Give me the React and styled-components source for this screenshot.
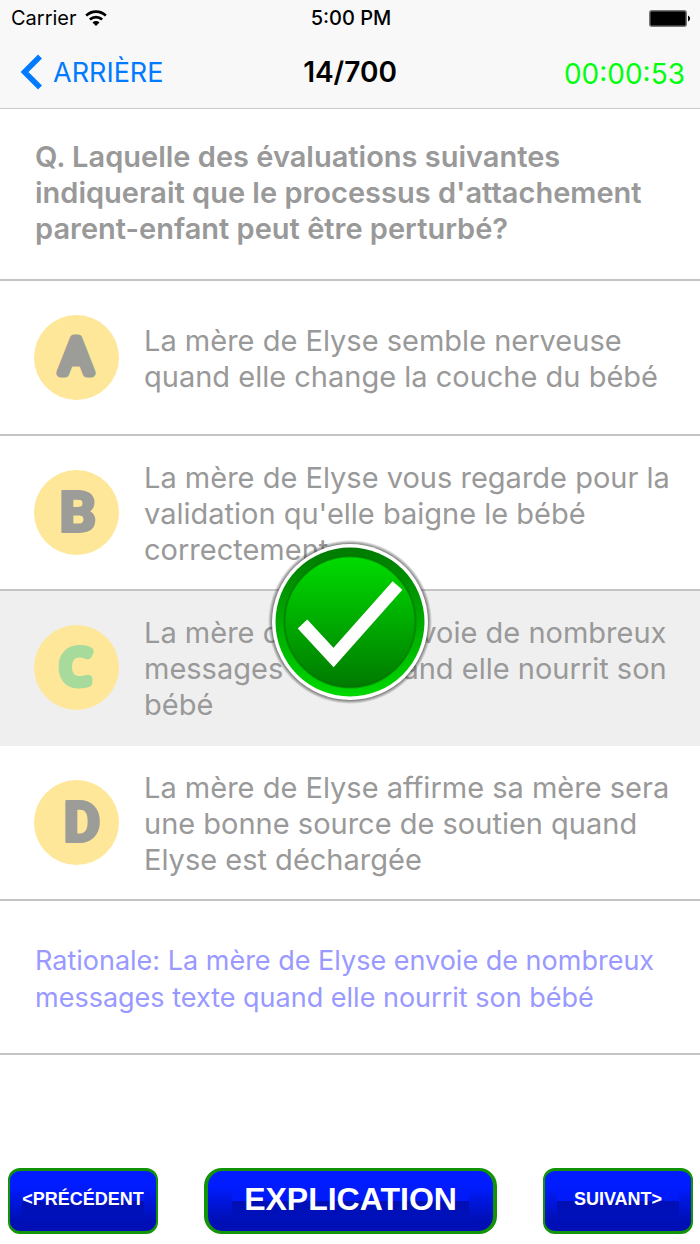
import React, { useState } from 'react'
import styled, { createGlobalStyle } from 'styled-components'

const GlobalStyle = createGlobalStyle`
  *, *::before, *::after {
    box-sizing: border-box;
  }

  body {
    margin: 0;
    background: #fff;
    font-family: Inter, Roboto, sans-serif;
  }

  h1, h2, p, ul {
    margin: 0;
    padding: 0;
  }
`

const Screen = styled.div`
  position: relative;
  display: flex;
  flex-direction: column;
  min-height: 100vh;
`

const Header = styled.header`
  background: #f8f8f8;
  border-bottom: 1px solid #cacaca;
`

const StatusBar = styled.div`
  display: grid;
  grid-template-columns: 1fr auto 1fr;
  align-items: center;
  height: 36px;
  padding: 0 9px 0 11px;
  font-size: 20px;
  color: #000;
`

const Carrier = styled.div`
  display: flex;
  align-items: center;
  gap: 8px;
`

const Clock = styled.div`
  font-weight: 500;
`

const Battery = styled.svg`
  justify-self: end;
`

const NavBar = styled.nav`
  display: grid;
  grid-template-columns: 1fr auto 1fr;
  align-items: center;
  height: 72px;
  padding: 0 15px;
`

const BackLink = styled.a`
  display: flex;
  align-items: center;
  gap: 10px;
  padding-left: 5px;
  font-size: 27px;
  color: #007aff;
  text-decoration: none;
`

const Counter = styled.h1`
  font-size: 28px;
  font-weight: 600;
`

const Timer = styled.div`
  justify-self: end;
  padding-top: 4px;
  font-size: 28px;
  color: #00ff0d;
`

const Question = styled.h2`
  padding: 30px 35px 32px;
  border-bottom: 2px solid #c4c4c4;
  font-size: 29px;
  font-weight: 600;
  line-height: 36px;
  color: #999;
`

const Options = styled.ul`
  list-style: none;
`

const OptionButton = styled.button`
  display: flex;
  align-items: center;
  gap: 25px;
  width: 100%;
  min-height: 155px;
  padding: 20px 24px 21px 34px;
  border: 0;
  border-bottom: 2px solid ${(props) => (props.$selected ? '#efefef' : '#c4c4c4')};
  background: ${(props) => (props.$selected ? '#efefef' : '#fff')};
  font-family: inherit;
  font-size: 29px;
  line-height: 36px;
  text-align: left;
  color: #999;
`

const OptionText = styled.span`
  padding-top: 4px;
`

const LetterBadge = styled.svg`
  flex: none;
  width: 85px;
  height: 85px;
`

const Rationale = styled.p`
  padding: 41px 35px 37px;
  border-bottom: 2px solid #c4c4c4;
  font-size: 27px;
  line-height: 37px;
  color: #9999ff;
`

const Footer = styled.footer`
  display: grid;
  grid-template-columns: 150fr 293fr 150fr;
  gap: 46px;
  margin-top: auto;
  padding: 16px 7px 10px 8px;
`

const FooterButton = styled.button`
  height: 66px;
  padding: 0 0 4px;
  border: 3px solid #139408;
  border-width: ${(props) => (props.$wide ? '3px 4px' : '3px 2px')};
  border-radius: ${(props) => (props.$wide ? '18px' : '12px')};
  background:
    linear-gradient(#001cff 0, #0019f6 50%, #0010b4 50%, #0011bc 100%) center / calc(100% - ${(props) => (props.$wide ? '48px' : '24px')}) 38px no-repeat,
    linear-gradient(#001cff 0, #001cff 25%, #0010b8 80%, #0010b4 100%);
  font-family: "Liberation Sans", Arial, sans-serif;
  font-size: ${(props) => (props.$wide ? '32px' : '18px')};
  font-weight: 700;
  white-space: nowrap;
  color: #fff;
`

const Result = styled.svg`
  position: absolute;
  top: 50%;
  left: 50%;
  width: 164px;
  height: 164px;
  margin: -82px 0 0 -82px;
  pointer-events: none;
`

const options = [
  { letter: 'A', x: 42, y: 58, round: true, text: 'La mère de Elyse semble nerveuse quand elle change la couche du bébé' },
  { letter: 'B', x: 44, y: 62, text: "La mère de Elyse vous regarde pour la validation qu'elle baigne le bébé correctement" },
  { letter: 'C', x: 41, y: 59, round: true, text: 'La mère de Elyse envoie de nombreux messages texte quand elle nourrit son bébé' },
  { letter: 'D', x: 48, y: 62, text: 'La mère de Elyse affirme sa mère sera une bonne source de soutien quand Elyse est déchargée' },
]

const Option = ({ letter, x, y, round, text, selected, onSelect }) => {
  const color = selected ? '#a6db9c' : '#9c9c98'

  return (
    <li>
      <OptionButton type="button" $selected={selected} aria-pressed={selected} onClick={onSelect}>
        <LetterBadge viewBox="0 0 85 85">
          <circle cx="42.5" cy="42.5" r="42.5" fill="#ffe799" />
          <text
            x={x}
            y={y}
            textAnchor="middle"
            fontFamily={round ? '"Open Sans", sans-serif' : 'Roboto, sans-serif'}
            fontSize={round ? 48 : 58}
            fontWeight={round ? 400 : 900}
            fill={color}
            stroke={color}
            strokeWidth={round ? 9 : 2}
            strokeLinejoin="round"
          >
            {letter}
          </text>
        </LetterBadge>
        <OptionText>{text}</OptionText>
      </OptionButton>
    </li>
  )
}

const App = () => {
  const [selected, setSelected] = useState('C')

  return (
    <>
      <GlobalStyle />
      <Screen>
        <Header>
          <StatusBar>
            <Carrier>
              Carrier
              <svg width="22" height="17" viewBox="0 0 22 17" fill="none" stroke="#000" strokeWidth="2.7" aria-label="Wi-Fi">
                <path d="M1.2 5.6a14 14 0 0 1 19.6 0" />
                <path d="M4.9 9.5a8.8 8.8 0 0 1 12.2 0" />
                <path d="M11 16l-3.5-3.5a5 5 0 0 1 7 0z" fill="#000" stroke="none" />
              </svg>
            </Carrier>
            <Clock>5:00 PM</Clock>
            <Battery width="42" height="17" viewBox="0 0 42 17" aria-label="Battery">
              <rect x="0.75" y="0.75" width="36.5" height="15.5" rx="2" fill="#000" stroke="#777" strokeWidth="1.5" />
              <path d="M39 5.5a3.2 3.2 0 0 1 0 6z" fill="#000" />
            </Battery>
          </StatusBar>
          <NavBar>
            <BackLink href="#">
              <svg width="23" height="36" viewBox="0 0 23 36" fill="none" stroke="#007aff" strokeWidth="5.5">
                <path d="M20 2.5L4.500 18 20 33.500" />
              </svg>
              ARRIÈRE
            </BackLink>
            <Counter>14/700</Counter>
            <Timer>00:00:53</Timer>
          </NavBar>
        </Header>

        <main>
          <Question>
            Q. Laquelle des évaluations suivantes indiquerait que le processus d'attachement parent-enfant peut être
            perturbé?
          </Question>
          <Options>
            {options.map((option) => (
              <Option
                key={option.letter}
                {...option}
                selected={selected === option.letter}
                onSelect={() => setSelected(option.letter)}
              />
            ))}
          </Options>
          <Rationale>Rationale: La mère de Elyse envoie de nombreux messages texte quand elle nourrit son bébé</Rationale>
        </main>

        <Footer>
          <FooterButton type="button">&lt;PRÉCÉDENT</FooterButton>
          <FooterButton type="button" $wide>EXPLICATION</FooterButton>
          <FooterButton type="button">SUIVANT&gt;</FooterButton>
        </Footer>

        {selected === 'C' && (
          <Result viewBox="0 0 164 164" role="img" aria-label="Correct">
            <defs>
              <linearGradient id="ring" x1="0" y1="0" x2="0" y2="1">
                <stop offset="0" stopColor="#007a00" />
                <stop offset="1" stopColor="#00d800" />
              </linearGradient>
              <linearGradient id="face" x1="0" y1="0" x2="0" y2="1">
                <stop offset="0" stopColor="#00dc00" />
                <stop offset="1" stopColor="#007a00" />
              </linearGradient>
              <radialGradient id="shade">
                <stop offset="0.94" stopColor="#333" stopOpacity="0.75" />
                <stop offset="1" stopColor="#333" stopOpacity="0" />
              </radialGradient>
            </defs>
            <circle cx="82" cy="82" r="82" fill="url(#shade)" />
            <circle cx="82" cy="82" r="78" fill="#fff" />
            <circle cx="82" cy="82" r="74.5" fill="url(#ring)" />
            <circle cx="82" cy="82" r="65.5" fill="url(#face)" stroke="#006400" strokeOpacity="0.45" strokeWidth="2" />
            <path d="M34.5 84l31 33.5L129.5 45.5" fill="none" stroke="#fff" strokeWidth="13" />
          </Result>
        )}
      </Screen>
    </>
  )
}

export default App
